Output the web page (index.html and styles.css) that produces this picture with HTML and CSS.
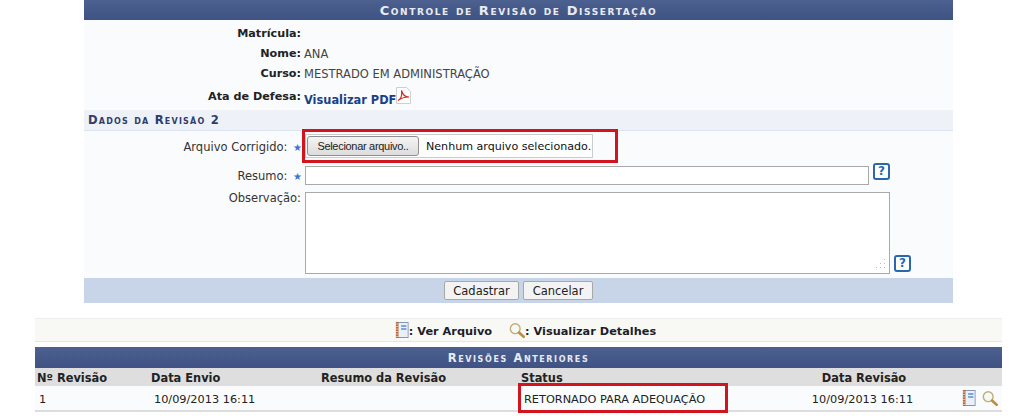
FILE: index.html
```html
<!DOCTYPE html>
<html lang="pt">
<head>
<meta charset="utf-8">
<title>Controle de Revisão de Dissertação</title>
<link rel="stylesheet" href="styles.css">
</head>
<body>
<svg class="defs" width="0" height="0" aria-hidden="true">
  <symbol id="i-note" viewBox="0 0 16 18">
    <rect x="3" y="1.500" width="12" height="15" fill="#eaf0f8" stroke="#8497b0"/>
    <rect x="1" y="1" width="3" height="16" fill="#b8683c"/>
    <path d="M1 3h3M1 5.500h3M1 8h3M1 10.500h3M1 13h3M1 15.500h3" stroke="#f2d9c2" stroke-width=".8"/>
    <path d="M7 5h6M7 8h6" stroke="#5a8fd0" stroke-width="1.400"/>
  </symbol>
  <symbol id="i-lens" viewBox="0 0 18 18">
    <circle cx="7" cy="7" r="5.500" fill="#f8f8f2" stroke="#bfae7c" stroke-width="1.600"/>
    <path d="M11.500 11.500l5 4.500" stroke="#bd8f42" stroke-width="3" stroke-linecap="round"/>
  </symbol>
</svg>
<main class="page">
  <section class="panel">
    <h2 class="title">Controle de Revisão de Dissertação</h2>
    <div class="info">
      <div class="row info-row"><span class="label strong">Matrícula:</span><span class="value"></span></div>
      <div class="row info-row"><span class="label strong">Nome:</span><span class="value">ANA</span></div>
      <div class="row info-row"><span class="label strong">Curso:</span><span class="value">MESTRADO EM ADMINISTRAÇÃO</span></div>
      <div class="row info-row pdf-row"><span class="label strong">Ata de Defesa:</span><span class="value"><a class="pdf-link" href="#">Visualizar PDF</a><svg class="pdf-icon" width="15" height="17" viewBox="0 0 15 17"><path d="M.5.500h10l4 4v12H.5z" fill="#fff" stroke="#cfcfcf"/><path d="M2 13.500c3-1.500 4-6 3.500-10 1 4 3 6.500 7.500 6.500-4 0-8 1-11 3.500z" fill="none" stroke="#d8231f" stroke-width="1.100"/></svg></span></div>
    </div>
    <h3 class="subtitle">Dados da Revisão 2</h3>
    <form class="fields">
      <div class="row file-row">
        <span class="label field-label">Arquivo Corrigido: <i class="req">★</i></span>
        <div class="file-box"><button type="button" class="pick">Selecionar arquivo..</button><span class="no-file">Nenhum arquivo selecionado.</span></div>
        <span class="mark file-mark"></span>
      </div>
      <div class="row resume-row">
        <span class="label field-label">Resumo: <i class="req">★</i></span>
        <input class="resume" type="text" aria-label="Resumo">
        <a class="help" href="#">?</a>
      </div>
      <div class="row obs-row">
        <span class="label obs-label">Observação:</span>
        <textarea class="obs" aria-label="Observação"></textarea>
        <svg class="grip" width="11" height="11" viewBox="0 0 11 11"><path d="M9 1h1v1H9zM5 5h1v1H5zM9 5h1v1H9zM1 9h1v1H1zM5 9h1v1H5zM9 9h1v1H9z" fill="#bbb"/></svg>
        <a class="help" href="#">?</a>
      </div>
    </form>
    <div class="actions"><button type="button" class="btn btn-save">Cadastrar</button><button type="button" class="btn btn-cancel">Cancelar</button></div>
  </section>

  <section class="list">
    <div class="legend">
      <svg class="ico" width="14" height="18" viewBox="0 0 16 18" preserveAspectRatio="none"><use href="#i-note"/></svg><span class="legend-text">: Ver Arquivo</span>
      <svg class="ico lens-gap" width="16" height="17" viewBox="0 0 18 18"><use href="#i-lens"/></svg><span class="legend-text">: Visualizar Detalhes</span>
    </div>
    <h2 class="title list-title">Revisões Anteriores</h2>
    <table class="revs">
      <thead>
        <tr><th class="c1">Nº Revisão</th><th class="c2">Data Envio</th><th class="c3">Resumo da Revisão</th><th class="c4">Status</th><th class="c5">Data Revisão</th><th class="c6"></th></tr>
      </thead>
      <tbody>
        <tr>
          <td class="c1">1</td><td class="c2">10/09/2013 16:11</td><td class="c3"></td>
          <td class="c4">RETORNADO PARA ADEQUAÇÃO<span class="mark status-mark"></span></td>
          <td class="c5">10/09/2013 16:11</td>
          <td class="c6"><svg class="ico" width="14" height="18" viewBox="0 0 16 18" preserveAspectRatio="none"><use href="#i-note"/></svg><svg class="ico row-lens" width="16" height="17" viewBox="0 0 18 18"><use href="#i-lens"/></svg></td>
        </tr>
      </tbody>
    </table>
  </section>
</main>
</body>
</html>
```
FILE: styles.css
```css
* { box-sizing: border-box; }
html, body { margin: 0; padding: 0; background: #fff; }
body {
  width: 1023px;
  height: 416px;
  overflow: hidden;
  font-family: "DejaVu Sans", Verdana, sans-serif;
  font-size: 11px;
  color: #222;
}
.defs { display: block; position: absolute; }
.page { display: flex; flex-direction: column; align-items: flex-start; }
.panel { width: 869px; margin-left: 84px; background: #f9fbfd; }
.title {
  margin: 0;
  height: 20px;
  background: linear-gradient(#4c6190, #3f5283);
  color: #e8ebf3;
  font-size: 13px;
  font-weight: bold;
  font-variant: small-caps;
  letter-spacing: 1.600px;
  line-height: 21px;
  text-align: center;
}
.row { display: flex; }
.label { width: 217px; text-align: right; flex: none; color: #333; font-size: 11.500px; }
.strong { font-weight: bold; color: #222; font-size: 11.200px; }
.info { padding-top: 3px; }
.info-row { height: 20px; align-items: center; }
.value { font-size: 11.500px; color: #444; padding: 1px 0 0 3px; display: flex; align-items: flex-end; white-space: nowrap; }
.pdf-row { height: 27px; padding-bottom: 1px; }
.pdf-link { color: #1a4188; font-weight: bold; font-size: 11.400px; text-decoration: none; }
.pdf-icon { margin: 0 0 3px 0; }
.subtitle {
  margin: 0;
  height: 21px;
  padding-left: 4px;
  background: #eef2f8;
  border-bottom: 1px solid #dfe5f0;
  color: #2f3d6b;
  font-size: 11.600px;
  font-weight: bold;
  font-variant: small-caps;
  letter-spacing: 1.200px;
  line-height: 20px;
}
.fields { height: 147px; }
.field-label { width: 218px; margin-right: 3px; }
.file-row { height: 30px; align-items: center; position: relative; }
.file-row .label { padding-top: 1px; }
.req { font-style: normal; color: #3f73d0; font-size: 10px; margin-left: 2px; }
.file-box { display: flex; align-items: center; height: 24px; width: 288px; background: #fff; border: 1px solid #ccc; }
.pick {
  flex: none;
  width: 112px;
  height: 20px;
  margin: 0 7px 0 1px;
  padding: 0;
  background: linear-gradient(#f4f4f4, #dcdcdc);
  border: 1px solid #8f8f8f;
  border-radius: 3px;
  font-family: "Liberation Sans", Arial, sans-serif;
  font-size: 11px;
  letter-spacing: -.3px;
  color: #222;
  white-space: nowrap;
}
.no-file { font-size: 11.100px; color: #111; white-space: nowrap; padding-top: 1px; }
.mark { position: absolute; border: 3px solid #d2141f; pointer-events: none; }
.file-mark { left: 218px; top: -2px; width: 316px; height: 34px; }
.resume-row { height: 21px; margin-top: 5px; }
.resume-row .label { padding-top: 3px; }
.resume { width: 564px; height: 19px; margin: 0; border: 1px solid #a9a9a9; background: #fff; padding: 0; }
.help {
  display: block;
  flex: none;
  width: 17px;
  height: 17px;
  margin: -3px 0 0 4px;
  border: 2px solid #2a67ad;
  border-radius: 3px;
  background: #fff;
  color: #2a67ad;
  font: bold 12px/13px "DejaVu Sans", sans-serif;
  text-align: center;
  text-decoration: none;
}
.obs-row { height: 82px; margin-top: 5px; align-items: flex-end; position: relative; }
.obs-label { position: absolute; left: 0; top: -1px; }
.obs { width: 585px; height: 82px; margin: 0 0 0 221px; border: 1px solid #a9a9a9; background: #fff; padding: 0; display: block; resize: none; }
.grip { position: absolute; left: 791px; top: 66px; }
.obs-row .help { margin: 0 0 2px 4px; }
.actions {
  height: 25px;
  background: #c8d5e9;
  display: flex;
  justify-content: center;
  align-items: center;
  gap: 4px;
}
.btn {
  height: 19px;
  padding: 0;
  background: #f3f3f3;
  border: 1px solid #a8a8a8;
  border-radius: 2px;
  font-family: "DejaVu Sans", sans-serif;
  font-size: 11.500px;
  color: #222;
}
.btn-save { width: 75px; }
.btn-cancel { width: 70px; }
.list { width: 967px; margin-left: 35px; margin-top: 15px; }
.legend {
  height: 24px;
  background: #f8f8f5;
  border-top: 1px solid #eeeeea;
  border-bottom: 1px solid #e8e6df;
  display: flex;
  justify-content: center;
  align-items: center;
  font-size: 11.300px;
  font-weight: bold;
  color: #1d1d2b;
  padding-left: 14px;
}
.legend-text { padding-top: 3px; }
.ico { display: block; flex: none; }
.lens-gap { margin-left: 17px; }
.list-title { margin-top: 5px; height: 21px; font-size: 11.500px; letter-spacing: 1.600px; line-height: 22px; }
.revs { width: 967px; border-collapse: collapse; table-layout: fixed; }
.revs th {
  height: 18px;
  padding: 2px 0 0;
  background: #dedede;
  font-size: 11.400px;
  font-weight: bold;
  color: #222;
  text-align: left;
  line-height: 16px;
}
.revs td {
  height: 25px;
  padding: 3px 0 0;
  background: #f9fbfd;
  border-bottom: 2px solid #dcdcdc;
  font-size: 11.300px;
  color: #222;
}
.revs .c1 { width: 116px; padding-left: 2px; }
.revs td.c1 { padding-left: 4px; }
.c2 { width: 170px; }
.revs td.c2 { padding-left: 3px; }
.c3 { width: 200px; }
.c4 { width: 255px; }
.revs .c5 { width: 170px; text-align: center; }
.revs th.c5 { padding-left: 6px; }
.revs td.c5 { padding-left: 3px; }
.c6 { width: 56px; }
.revs td.c4 { position: relative; padding-left: 3px; white-space: nowrap; }
.status-mark { left: -3px; top: -3px; width: 210px; height: 30px; }
.revs td.c6 { text-align: right; padding: 0 4px 0 0; }
td.c6 svg { display: inline-block; vertical-align: middle; }
.row-lens { margin-left: 6px; }
```
